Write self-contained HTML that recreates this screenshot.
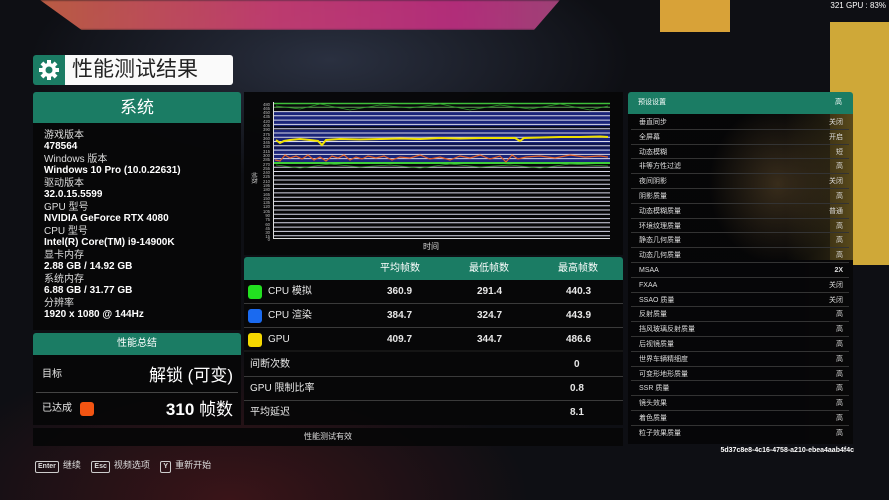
<!DOCTYPE html>
<html><head><meta charset="utf-8"><style>
*{margin:0;padding:0;box-sizing:border-box}
body{width:889px;height:500px;overflow:hidden;position:relative;background:#0b0c10;font-family:"Liberation Sans","Noto Sans CJK SC",sans-serif;color:#e8e8e8}
.abs{position:absolute}
.teal{background:#1b7c64}
.panel{background:rgba(6,6,8,0.93)}
.lbl{font-size:10px;color:#ddd;line-height:11px}
.val{font-size:10px;font-weight:bold;color:#fff;line-height:11px}
.row{position:absolute;left:244px;width:379px;height:24px;border-bottom:1px solid #3a3a3a;font-size:10px}
.row span{position:absolute;top:6px;line-height:12px;height:12px}
.r{position:absolute;left:631px;width:218px;height:14.8px;border-bottom:1px solid #333;font-size:7px;color:#ddd}
.r b{position:absolute;left:8px;top:3px;font-weight:normal;line-height:9px;height:9px}
.r i{position:absolute;right:6px;top:3px;font-style:normal;line-height:9px;height:9px}
.key{display:inline-block;border:1px solid #ccc;border-radius:2px;font-size:7px;padding:1px 2px;margin-right:4px;font-weight:bold;line-height:8px}
</style></head><body>
<div class="abs" style="left:0;top:0;width:889px;height:500px;background:radial-gradient(ellipse 300px 150px at 230px 500px,#3a1418,transparent),radial-gradient(ellipse 300px 120px at 330px 60px,#2a3040,transparent),#0e0f14"></div>
<div class="abs" style="left:40px;top:0;width:520px;height:30px;background:linear-gradient(90deg,#d86a4c,#d8407a 45%,#cc3088 80%,#b84a88);clip-path:polygon(0 0,100% 0,95% 100%,8% 100%);opacity:.85;filter:blur(1px)"></div>
<div class="abs" style="left:660px;top:0;width:70px;height:32px;background:#d8a238"></div>
<div class="abs" style="left:830px;top:22px;width:59px;height:243px;background:#cfa838"></div>
<div class="abs" style="right:3px;top:1px;font-size:8px;color:#fff">321 GPU : 83%</div>

<div class="abs teal" style="left:33px;top:55px;width:32px;height:30px;border-radius:3px 0 0 3px"></div>
<svg class="abs" style="left:38px;top:59px" width="22" height="22" viewBox="0 0 22 22"><g fill="#fff"><circle cx="11" cy="11" r="7"/><rect x="9" y="1" width="4" height="20"/><rect x="1" y="9" width="20" height="4"/><rect x="9" y="1" width="4" height="20" transform="rotate(45 11 11)"/><rect x="9" y="1" width="4" height="20" transform="rotate(-45 11 11)"/></g><circle cx="11" cy="11" r="3.5" fill="#1b7c64"/></svg>
<div class="abs" style="left:65px;top:55px;width:168px;height:30px;background:#fafafa;border-radius:0 3px 3px 0;color:#222;font-size:21px;line-height:30px;padding-left:7px">性能测试结果</div>

<div class="abs teal" style="left:33px;top:92px;width:208px;height:31px;font-size:17px;line-height:31px;text-align:center;color:#fff;border-radius:3px 3px 0 0">系统</div>
<div class="abs panel" style="left:33px;top:123px;width:208px;height:207px"></div>
<div class="abs" style="left:44px;top:130px">
<div class="lbl">游戏版本</div><div class="val">478564</div>
<div class="lbl" style="margin-top:2px">Windows 版本</div><div class="val">Windows 10 Pro (10.0.22631)</div>
<div class="lbl" style="margin-top:2px">驱动版本</div><div class="val">32.0.15.5599</div>
<div class="lbl" style="margin-top:2px">GPU 型号</div><div class="val">NVIDIA GeForce RTX 4080</div>
<div class="lbl" style="margin-top:2px">CPU 型号</div><div class="val">Intel(R) Core(TM) i9-14900K</div>
<div class="lbl" style="margin-top:2px">显卡内存</div><div class="val">2.88 GB / 14.92 GB</div>
<div class="lbl" style="margin-top:2px">系统内存</div><div class="val">6.88 GB / 31.77 GB</div>
<div class="lbl" style="margin-top:2px">分辨率</div><div class="val">1920 x 1080 @ 144Hz</div>
</div>

<div class="abs teal" style="left:33px;top:333px;width:208px;height:22px;font-size:10px;line-height:22px;text-align:center;color:#fff;border-radius:3px 3px 0 0">性能总结</div>
<div class="abs panel" style="left:33px;top:355px;width:208px;height:70px"></div>
<div class="abs" style="left:36px;top:392px;width:202px;height:1px;background:#444"></div>
<div class="abs" style="left:42px;top:369px;font-size:10px;line-height:12px">目标</div>
<div class="abs" style="right:656px;top:365px;font-size:17px;line-height:22px;color:#fff">解锁 (可变)</div>
<div class="abs" style="left:42px;top:403px;font-size:10px;line-height:12px">已达成</div>
<div class="abs" style="left:80px;top:402px;width:14px;height:14px;background:#f25412;border-radius:3px"></div>
<div class="abs" style="right:656px;top:399px;font-size:17px;line-height:22px;color:#fff;font-weight:bold">310 <span style="font-weight:normal">帧数</span></div>

<div class="abs panel" style="left:244px;top:92px;width:379px;height:163px"></div>
<svg class="abs" style="left:244px;top:92px" width="379" height="163" viewBox="244 92 379 163">
<rect x="274" y="112" width="336" height="50" fill="#1a2478"/>
<rect x="274" y="126" width="336" height="4" fill="#0a0c20"/>
<rect x="274" y="143" width="336" height="6" fill="#101650"/>
<g stroke="#d8d8e8" stroke-width="1">
<line x1="274" x2="610" y1="107.3" y2="107.3" stroke="#5aa050"/><line x1="274" x2="610" y1="111.6" y2="111.6"/><line x1="274" x2="610" y1="115.8" y2="115.8"/><line x1="274" x2="610" y1="120.1" y2="120.1"/><line x1="274" x2="610" y1="124.4" y2="124.4"/><line x1="274" x2="610" y1="128.7" y2="128.7"/><line x1="274" x2="610" y1="133" y2="133"/><line x1="274" x2="610" y1="137.2" y2="137.2"/><line x1="274" x2="610" y1="141.5" y2="141.5"/><line x1="274" x2="610" y1="145.8" y2="145.8"/><line x1="274" x2="610" y1="150.1" y2="150.1"/><line x1="274" x2="610" y1="154.4" y2="154.4"/><line x1="274" x2="610" y1="158.6" y2="158.6"/><line x1="274" x2="610" y1="162.9" y2="162.9"/><line x1="274" x2="610" y1="167.2" y2="167.2"/><line x1="274" x2="610" y1="171.5" y2="171.5"/><line x1="274" x2="610" y1="175.8" y2="175.8"/><line x1="274" x2="610" y1="180" y2="180"/><line x1="274" x2="610" y1="184.3" y2="184.3"/><line x1="274" x2="610" y1="188.6" y2="188.6"/><line x1="274" x2="610" y1="192.9" y2="192.9"/><line x1="274" x2="610" y1="197.2" y2="197.2"/><line x1="274" x2="610" y1="201.4" y2="201.4"/><line x1="274" x2="610" y1="205.7" y2="205.7"/><line x1="274" x2="610" y1="210" y2="210"/><line x1="274" x2="610" y1="214.3" y2="214.3"/><line x1="274" x2="610" y1="218.6" y2="218.6"/><line x1="274" x2="610" y1="222.8" y2="222.8"/><line x1="274" x2="610" y1="227.1" y2="227.1"/><line x1="274" x2="610" y1="231.4" y2="231.4"/><line x1="274" x2="610" y1="235.7" y2="235.7"/>
</g>
<line x1="274" x2="610" y1="103.5" y2="103.5" stroke="#3fbf3a" stroke-width="1.5"/>
<line x1="274" x2="610" y1="163" y2="163" stroke="#3fcf3a" stroke-width="2"/>
<polyline fill="none" stroke="#2e9a2a" stroke-width="0.8" points="276,106 300,109 320,104 350,110 380,105 410,108 440,104 470,110 500,105 530,109 560,104 590,110 608,106"/>
<polyline fill="none" stroke="#2e9a2a" stroke-width="0.8" points="276,165 300,168 330,164 360,167 390,165 420,168 450,164 480,167 510,165 540,168 570,164 608,166"/>
<polyline fill="none" stroke="#f0e000" stroke-width="2" points="276,140 280,143 284,141 290,140 300,139 310,140 318,141 322,145 326,140 340,139 360,139.5 380,139 400,138.5 420,139 440,138 460,138.5 480,138 500,138 515,138 520,141 524,138 540,137.5 560,137 580,137 600,136.5 608,137"/>
<polyline fill="none" stroke="#e0602a" stroke-width="1.2" points="275,160 280,161 285,155 290,158 296,156 302,159 308,155 314,160 320,157 326,161 332,156 338,158 344,155 350,160 356,157 362,159 368,156 376,158 384,156 392,160 400,157 410,158 420,155 430,159 440,157 450,160 460,156 470,158 480,155 490,159 500,156 506,162 512,155 518,159 526,157 540,156 555,158 570,155 585,157 600,156 608,157"/>
<line x1="273.5" x2="273.5" y1="102" y2="239" stroke="#ddd"/>
<line x1="273" x2="610" y1="238.5" y2="238.5" stroke="#ddd"/>
<text x="431" y="249" font-size="8" fill="#ddd" font-family="Liberation Sans,Noto Sans CJK SC,sans-serif" text-anchor="middle">时间</text>
<g font-size="4.2" fill="#bbb" font-family="Liberation Sans,sans-serif" text-anchor="end">
<text x="270" y="106">480</text><text x="270" y="110">465</text><text x="270" y="114">450</text><text x="270" y="118">435</text><text x="270" y="123">420</text><text x="270" y="127">405</text><text x="270" y="131">390</text><text x="270" y="136">375</text><text x="270" y="140">360</text><text x="270" y="144">345</text><text x="270" y="148">330</text><text x="270" y="153">315</text><text x="270" y="157">300</text><text x="270" y="161">285</text><text x="270" y="166">270</text><text x="270" y="170">255</text><text x="270" y="174">240</text><text x="270" y="178">225</text><text x="270" y="183">210</text><text x="270" y="187">195</text><text x="270" y="191">180</text><text x="270" y="196">165</text><text x="270" y="200">150</text><text x="270" y="204">135</text><text x="270" y="208">120</text><text x="270" y="213">105</text><text x="270" y="217">90</text><text x="270" y="221">75</text><text x="270" y="226">60</text><text x="270" y="230">45</text><text x="270" y="234">30</text><text x="270" y="238">15</text><text x="270" y="241">0</text>
</g>
<text x="252" y="172" font-size="6" fill="#bbb" transform="rotate(90 252 172)" font-family="Liberation Sans,Noto Sans CJK SC,sans-serif">帧数</text>
</svg>

<div class="abs teal" style="left:244px;top:257px;width:379px;height:23px;border-radius:3px 3px 0 0;font-size:10px;line-height:12px;color:#fff">
<span class="abs" style="left:136px;top:6px">平均帧数</span><span class="abs" style="left:225px;top:6px">最低帧数</span><span class="abs" style="left:314px;top:6px">最高帧数</span></div>
<div class="abs panel" style="left:244px;top:280px;width:379px;height:145px"></div>
<div class="row" style="top:280px"><i class="abs" style="left:4px;top:5px;width:14px;height:14px;background:#22e020;border-radius:3px"></i><span style="left:24px">CPU 模拟</span><span style="left:143px;font-weight:bold">360.9</span><span style="left:233px;font-weight:bold">291.4</span><span style="left:322px;font-weight:bold">440.3</span></div>
<div class="row" style="top:304px"><i class="abs" style="left:4px;top:5px;width:14px;height:14px;background:#1a6af0;border-radius:3px"></i><span style="left:24px">CPU 渲染</span><span style="left:143px;font-weight:bold">384.7</span><span style="left:233px;font-weight:bold">324.7</span><span style="left:322px;font-weight:bold">443.9</span></div>
<div class="row" style="top:328px;border-bottom:2px solid #151515"><i class="abs" style="left:4px;top:5px;width:14px;height:14px;background:#f5d800;border-radius:3px"></i><span style="left:24px">GPU</span><span style="left:143px;font-weight:bold">409.7</span><span style="left:233px;font-weight:bold">344.7</span><span style="left:322px;font-weight:bold">486.6</span></div>
<div class="row" style="top:353px"><span style="left:6px">间断次数</span><span style="left:330px;font-weight:bold">0</span></div>
<div class="row" style="top:377px"><span style="left:6px">GPU 限制比率</span><span style="left:326px;font-weight:bold">0.8</span></div>
<div class="row" style="top:401px;border:none"><span style="left:6px">平均延迟</span><span style="left:326px;font-weight:bold">8.1</span></div>

<div class="abs panel" style="left:33px;top:428px;width:590px;height:18px;font-size:8px;line-height:18px;text-align:center;color:#ddd">性能测试有效</div>
<div class="abs" style="left:35px;top:459px;font-size:9px;line-height:12px;color:#ddd"><span class="key">Enter</span>继续 <span class="key" style="margin-left:8px">Esc</span>视频选项 <span class="key" style="margin-left:8px">Y</span>重新开始</div>

<div class="abs teal" style="left:628px;top:92px;width:225px;height:22px;border-radius:3px 3px 0 0;font-size:7px;line-height:9px;color:#fff"><span class="abs" style="left:10px;top:6px">预设设置</span><span class="abs" style="right:11px;top:6px">高</span></div>
<div class="abs" style="left:628px;top:114px;width:225px;height:330px;background:radial-gradient(ellipse 70px 80px at 150px 70px,rgba(90,70,40,.6),transparent),linear-gradient(90deg,rgba(5,5,6,.95) 70%,rgba(60,50,20,.8));"></div>
<div class="abs" style="left:628px;top:260px;width:225px;height:184px;background:rgba(6,6,8,.95)"></div>
<div class="r" style="top:115px"><b>垂直同步</b><i>关闭</i></div>
<div class="r" style="top:129.8px"><b>全屏幕</b><i>开启</i></div>
<div class="r" style="top:144.6px"><b>动态模糊</b><i>短</i></div>
<div class="r" style="top:159.4px"><b>非等方性过滤</b><i>高</i></div>
<div class="r" style="top:174.2px"><b>夜间阴影</b><i>关闭</i></div>
<div class="r" style="top:189px"><b>阴影质量</b><i>高</i></div>
<div class="r" style="top:203.8px"><b>动态模糊质量</b><i>普通</i></div>
<div class="r" style="top:218.6px"><b>环境纹理质量</b><i>高</i></div>
<div class="r" style="top:233.4px"><b>静态几何质量</b><i>高</i></div>
<div class="r" style="top:248.2px"><b>动态几何质量</b><i>高</i></div>
<div class="r" style="top:263px"><b>MSAA</b><i style="font-weight:bold">2X</i></div>
<div class="r" style="top:277.8px"><b>FXAA</b><i>关闭</i></div>
<div class="r" style="top:292.6px"><b>SSAO 质量</b><i>关闭</i></div>
<div class="r" style="top:307.4px"><b>反射质量</b><i>高</i></div>
<div class="r" style="top:322.2px"><b>挡风玻璃反射质量</b><i>高</i></div>
<div class="r" style="top:337px"><b>后视镜质量</b><i>高</i></div>
<div class="r" style="top:351.8px"><b>世界车辆精细度</b><i>高</i></div>
<div class="r" style="top:366.6px"><b>可变形地形质量</b><i>高</i></div>
<div class="r" style="top:381.4px"><b>SSR 质量</b><i>高</i></div>
<div class="r" style="top:396.2px"><b>镜头效果</b><i>高</i></div>
<div class="r" style="top:411px"><b>着色质量</b><i>高</i></div>
<div class="r" style="top:425.8px;border:none"><b>粒子效果质量</b><i>高</i></div>
<div class="abs" style="right:35px;top:447px;font-size:7px;font-weight:bold;color:#fff">5d37c8e8-4c16-4758-a210-ebea4aab4f4c</div>
</body></html>
